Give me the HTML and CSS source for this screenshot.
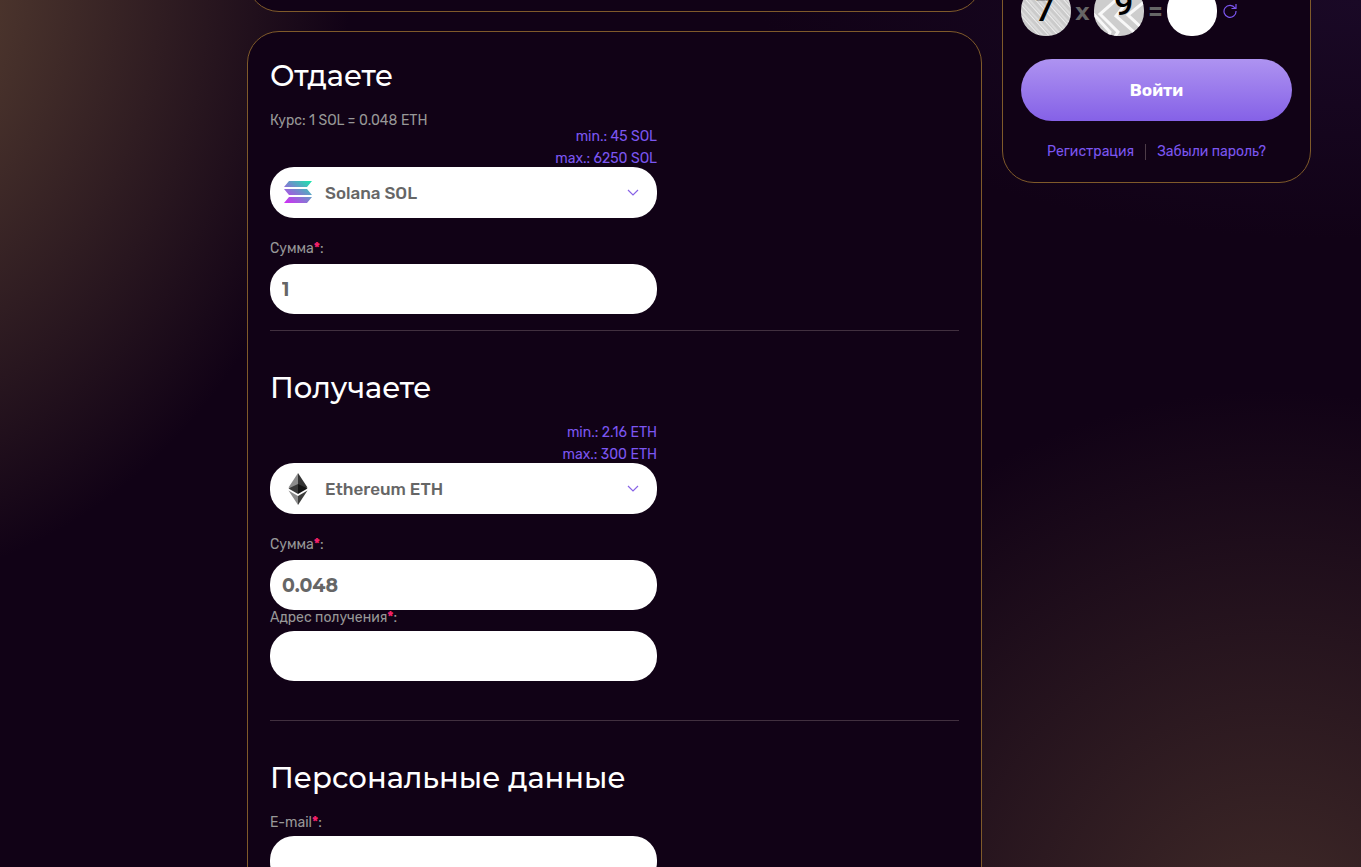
FILE: index.html
```html
<!DOCTYPE html>
<html lang="ru">
<head>
    <meta charset="UTF-8">
    <meta name="viewport" content="width=device-width, initial-scale=1.0">
    <title>Обмен Solana SOL на Ethereum ETH</title>
    <link rel="stylesheet" href="styles.css">
</head>
<body>
    <div class="page">
        <main class="content">
            <div class="card card-top"></div>

            <form class="card exchange">
                <!-- Give -->
                <section class="block">
                    <h2>Отдаете</h2>
                    <div class="fields">
                        <p class="rate">Курс: 1 SOL = 0.048 ETH</p>
                        <div class="limits">
                            <span>min.: 45 SOL</span>
                            <span>max.: 6250 SOL</span>
                        </div>
                        <div class="currency">
                            <svg class="coin" viewBox="0 0 36 36">
                                <defs>
                                    <linearGradient id="sol" gradientUnits="userSpaceOnUse" x1="28" y1="4" x2="9" y2="31">
                                        <stop offset="0" stop-color="#19e6ad"/>
                                        <stop offset="0.5" stop-color="#7b83cf"/>
                                        <stop offset="1" stop-color="#d22cf5"/>
                                    </linearGradient>
                                </defs>
                                <path fill="url(#sol)" d="M9 6h23l-5 6H4zM4 14h23l5 6H9zM9 22h23l-5 6H4z"/>
                            </svg>
                            <select aria-label="Отдаете">
                                <option>Solana SOL</option>
                            </select>
                            <svg class="arrow" viewBox="0 0 12 12"><path d="M1 3l5 5 5-5"/></svg>
                        </div>
                        <label for="sum1">Сумма<b>*</b>:</label>
                        <input type="text" id="sum1" value="1">
                    </div>
                </section>

                <!-- Receive -->
                <section class="block block-receive">
                    <h2>Получаете</h2>
                    <div class="fields">
                        <div class="limits">
                            <span>min.: 2.16 ETH</span>
                            <span>max.: 300 ETH</span>
                        </div>
                        <div class="currency">
                            <svg class="coin" viewBox="0 0 36 36">
                                <path fill="#8c8c8c" d="M18 2v17.500l-9.500-3z"/>
                                <path fill="#343434" d="M18 2v17.500l9.500-3z"/>
                                <path fill="#393939" d="M18 13l-9.500 4.500L18 23z"/>
                                <path fill="#141414" d="M18 13l9.500 4.500L18 23z"/>
                                <path fill="#8c8c8c" d="M18 34v-9l-9.500-5.500z"/>
                                <path fill="#3c3c3b" d="M18 34v-9l9.500-5.500z"/>
                            </svg>
                            <select aria-label="Получаете">
                                <option>Ethereum ETH</option>
                            </select>
                            <svg class="arrow" viewBox="0 0 12 12"><path d="M1 3l5 5 5-5"/></svg>
                        </div>
                        <label for="sum2">Сумма<b>*</b>:</label>
                        <input type="text" id="sum2" value="0.048">
                        <label class="label-tight" for="address">Адрес получения<b>*</b>:</label>
                        <input type="text" id="address">
                    </div>
                </section>

                <!-- Personal data -->
                <section class="block">
                    <h2>Персональные данные</h2>
                    <div class="fields">
                        <label class="label-tight" for="email">E-mail<b>*</b>:</label>
                        <input type="text" id="email">
                    </div>
                </section>
            </form>
        </main>

        <aside class="sidebar">
            <form class="card login">
                <div class="captcha">
                    <svg class="captcha-img" viewBox="0 0 50 50">
                        <defs>
                            <pattern id="lines" width="7" height="7" patternUnits="userSpaceOnUse" patternTransform="rotate(-42)">
                                <rect width="7" height="7" fill="#cbcbcb"/>
                                <path d="M1.500 0v7M4 0v7" stroke="#eee" stroke-width="1"/>
                            </pattern>
                        </defs>
                        <rect width="50" height="50" fill="url(#lines)"/>
                        <text x="14" y="35">7</text>
                    </svg>
                    <span>x</span>
                    <svg class="captcha-img" viewBox="0 0 50 50">
                        <rect width="50" height="50" fill="#cdcdcd"/>
                        <path class="zigzag" d="M22 14L6 28l18 18-4 6M-6 22l22 24-2 6M50 16L34 29l16 15M30 20l-8 10 18 16-4 6"/>
                        <text x="20" y="29">9</text>
                    </svg>
                    <span>=</span>
                    <input type="text" aria-label="Ответ">
                    <button type="button" class="reload" aria-label="Обновить">
                        <svg viewBox="0 0 14 14"><path d="M12 4A6 6 0 1 0 13 7M13 0v4.500H8.500"/></svg>
                    </button>
                </div>
                <button type="submit" class="login-button">Войти</button>
                <div class="links">
                    <a href="#">Регистрация</a>
                    <a href="#">Забыли пароль?</a>
                </div>
            </form>
        </aside>
    </div>
</body>
</html>
```
FILE: styles.css
```css
* {
    box-sizing: border-box;
}
body {
    margin: 0;
    height: 100vh;
    overflow: hidden;
    background-color: #110216;
    background-image:
        radial-gradient(ellipse 510px 610px at -160px -20px, #644a36, #11021600),
        radial-gradient(circle 560px at 1270px 950px, #412b28, #11021600),
        radial-gradient(ellipse 600px 240px at 1361px 0, #1a0926, #11021600);
    color: #989898;
    font-family: Rubik, Roboto, sans-serif;
    font-size: 14px;
    line-height: 16px;
}
a {
    color: #7c56f1;
    text-decoration: none;
}
h2 {
    margin: 0 0 15px;
    color: white;
    font-family: Montserrat, Inter, sans-serif;
    font-size: 29px;
    font-weight: 500;
    line-height: 44px;
}
.page {
    display: grid;
    grid-template-columns: 1fr 309px;
    align-items: start;
    gap: 20px;
    padding: 0 50px 0 247px;
}
.card {
    background-color: #110216;
    border: 1px solid #7f5a2a;
    border-radius: 32px;
}
.card-top {
    height: 70px;
    margin-top: -58px;
    margin-bottom: 19px;
}
.exchange {
    padding: 22px;
}
.block {
    padding-bottom: 16px;
    margin-bottom: 35px;
    border-bottom: 1px solid #41303f;
}
.block-receive {
    padding-bottom: 39px;
}
.fields {
    display: flex;
    flex-direction: column;
    width: 387px;
    max-width: 100%;
}
.rate {
    margin: 0;
}
.limits {
    display: flex;
    flex-direction: column;
    align-items: flex-end;
    gap: 6px;
    color: #7c56f1;
}
.currency {
    display: flex;
    align-items: center;
    height: 51px;
    margin-bottom: 23px;
    padding: 0 18px 0 10px;
    background: white;
    border-radius: 24px;
}
.coin {
    width: 36px;
    height: 36px;
}
select {
    flex: 1;
    height: 100%;
    margin-left: 9px;
    padding: 0;
    border: none;
    background: none;
    appearance: none;
    color: #666;
    font: 500 17px Rubik, Roboto, sans-serif;
}
.arrow {
    width: 12px;
    height: 12px;
    fill: none;
    stroke: #8863e6;
    stroke-width: 1.2;
}
label {
    margin-bottom: 7px;
}
.label-tight {
    margin-bottom: 5px;
}
label b {
    color: #f3206a;
}
input {
    height: 50px;
    padding: 0 12px;
    border: none;
    border-radius: 24px;
    background: white;
    color: #666;
    font: 700 19px Montserrat, Inter, sans-serif;
}

/* Login form */
.login {
    margin-top: -60px;
    padding: 45px 18px 22px;
}
.captcha {
    display: flex;
    align-items: center;
    margin-bottom: 23px;
    font: 700 24px Montserrat, Inter, sans-serif;
    color: #666;
}
.captcha span {
    width: 23px;
    text-align: center;
}
.captcha input {
    width: 50px;
}
.captcha-img {
    width: 50px;
    height: 50px;
    border-radius: 24px;
}
.captcha-img text {
    fill: black;
    font: 500 34px Roboto, sans-serif;
}
.zigzag {
    fill: none;
    stroke: #f8f8f8;
    stroke-width: 3;
}
.reload {
    display: flex;
    margin-left: 6px;
    padding: 0;
    border: none;
    background: none;
    cursor: pointer;
}
.reload svg {
    width: 14px;
    height: 14px;
    fill: none;
    stroke: #7c56f1;
    stroke-width: 1.2;
}
.login-button {
    display: block;
    width: 100%;
    height: 62px;
    border: none;
    border-radius: 31px;
    background: linear-gradient(#ae93f1, #8561e7);
    color: white;
    font: 700 17px Rubik, Roboto, sans-serif;
    cursor: pointer;
}
.links {
    display: flex;
    justify-content: center;
    margin-top: 23px;
}
.links a + a {
    margin-left: 11px;
    padding-left: 11px;
    border-left: 1px solid #4d3c48;
}
```
